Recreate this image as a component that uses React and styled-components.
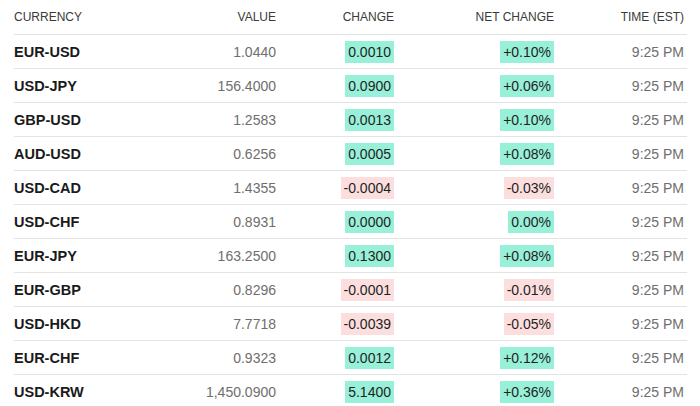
import React from "react";
import styled, { createGlobalStyle } from "styled-components";

const GlobalStyle = createGlobalStyle`
  body {
    margin: 0;
    background: #ffffff;
    font-family: "Liberation Sans", Arial, sans-serif;
  }
`;

const rates = [
  { pair: "EUR-USD", value: "1.0440", change: "0.0010", net: "+0.10%", up: true },
  { pair: "USD-JPY", value: "156.4000", change: "0.0900", net: "+0.06%", up: true },
  { pair: "GBP-USD", value: "1.2583", change: "0.0013", net: "+0.10%", up: true },
  { pair: "AUD-USD", value: "0.6256", change: "0.0005", net: "+0.08%", up: true },
  { pair: "USD-CAD", value: "1.4355", change: "-0.0004", net: "-0.03%", up: false },
  { pair: "USD-CHF", value: "0.8931", change: "0.0000", net: "0.00%", up: true },
  { pair: "EUR-JPY", value: "163.2500", change: "0.1300", net: "+0.08%", up: true },
  { pair: "EUR-GBP", value: "0.8296", change: "-0.0001", net: "-0.01%", up: false },
  { pair: "USD-HKD", value: "7.7718", change: "-0.0039", net: "-0.05%", up: false },
  { pair: "EUR-CHF", value: "0.9323", change: "0.0012", net: "+0.12%", up: true },
  { pair: "USD-KRW", value: "1,450.0900", change: "5.1400", net: "+0.36%", up: true },
];

const Table = styled.div`
  margin: 0 13px 0 14px;
`;

const Row = styled.div`
  display: grid;
  grid-template-columns: 156px 106px 118px 160px 1fr;
  align-items: center;
  height: ${(p) => (p.head ? "35px" : "34px")};
  box-sizing: border-box;
  border-bottom: 1px solid #e3e3e3;
`;

const HeadCell = styled.div`
  font-size: 12px;
  color: #3a3a3a;
  text-align: ${(p) => (p.left ? "left" : "right")};
  padding-right: ${(p) => (p.last ? "3px" : "0")};
`;

const Pair = styled.div`
  font-size: 14.5px;
  font-weight: 700;
  color: #1a1a1a;
`;

const Value = styled.div`
  font-size: 14px;
  color: #6e6e6e;
  text-align: right;
  padding-right: ${(p) => (p.last ? "3px" : "0")};
`;

const BadgeCell = styled.div`
  display: flex;
  justify-content: flex-end;
`;

const Badge = styled.span`
  display: inline-block;
  height: 22px;
  line-height: 22px;
  padding: 0 3px;
  font-size: 14px;
  color: #1f1f1f;
  background: ${(p) => (p.up ? "#98f0d9" : "#fddede")};
`;

export default function App() {
  return (
    <Table>
      <GlobalStyle />
      <Row head>
        <HeadCell left>CURRENCY</HeadCell>
        <HeadCell>VALUE</HeadCell>
        <HeadCell>CHANGE</HeadCell>
        <HeadCell>NET CHANGE</HeadCell>
        <HeadCell last>TIME (EST)</HeadCell>
      </Row>
      {rates.map((r) => (
        <Row key={r.pair}>
          <Pair>{r.pair}</Pair>
          <Value>{r.value}</Value>
          <BadgeCell>
            <Badge up={r.up}>{r.change}</Badge>
          </BadgeCell>
          <BadgeCell>
            <Badge up={r.up}>{r.net}</Badge>
          </BadgeCell>
          <Value last>9:25 PM</Value>
        </Row>
      ))}
    </Table>
  );
}
